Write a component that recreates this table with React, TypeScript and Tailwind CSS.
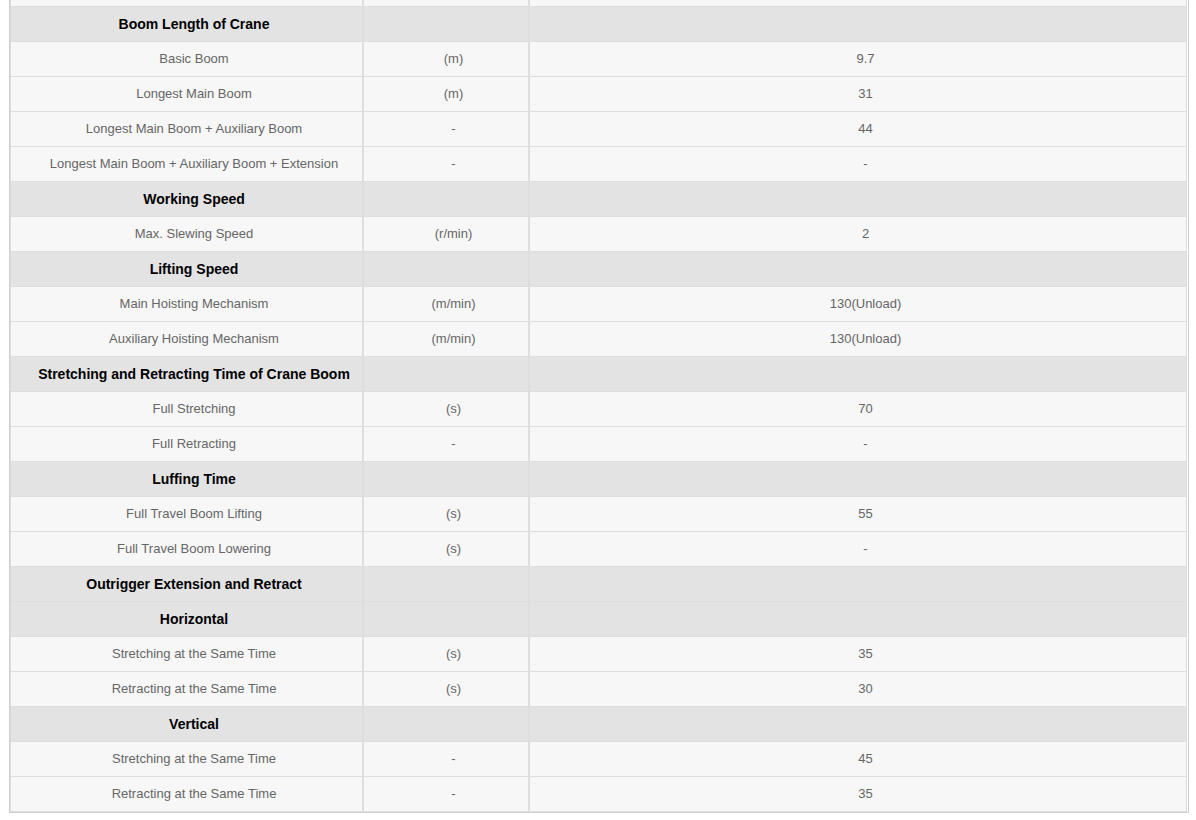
type Row = { label: string; unit?: string; value?: string; head?: boolean };

const rows: Row[] = [
  { label: "", unit: "", value: "" },
  { label: "Boom Length of Crane", head: true },
  { label: "Basic Boom", unit: "(m)", value: "9.7" },
  { label: "Longest Main Boom", unit: "(m)", value: "31" },
  { label: "Longest Main Boom + Auxiliary Boom", unit: "-", value: "44" },
  { label: "Longest Main Boom + Auxiliary Boom + Extension", unit: "-", value: "-" },
  { label: "Working Speed", head: true },
  { label: "Max. Slewing Speed", unit: "(r/min)", value: "2" },
  { label: "Lifting Speed", head: true },
  { label: "Main Hoisting Mechanism", unit: "(m/min)", value: "130(Unload)" },
  { label: "Auxiliary Hoisting Mechanism", unit: "(m/min)", value: "130(Unload)" },
  { label: "Stretching and Retracting Time of Crane Boom", head: true },
  { label: "Full Stretching", unit: "(s)", value: "70" },
  { label: "Full Retracting", unit: "-", value: "-" },
  { label: "Luffing Time", head: true },
  { label: "Full Travel Boom Lifting", unit: "(s)", value: "55" },
  { label: "Full Travel Boom Lowering", unit: "(s)", value: "-" },
  { label: "Outrigger Extension and Retract", head: true },
  { label: "Horizontal", head: true },
  { label: "Stretching at the Same Time", unit: "(s)", value: "35" },
  { label: "Retracting at the Same Time", unit: "(s)", value: "30" },
  { label: "Vertical", head: true },
  { label: "Stretching at the Same Time", unit: "-", value: "45" },
  { label: "Retracting at the Same Time", unit: "-", value: "35" },
];

function Cell({ text, head, last }: { text?: string; head?: boolean; last?: boolean }) {
  return (
    <div
      className={`flex h-[35px] items-center justify-center border-x border-t border-[#dedede] pl-[15px] ${
        last ? "h-[36px] border-b" : ""
      } ${
        head
          ? "bg-[#e3e3e3] text-[14px] font-bold text-black"
          : "bg-[#f7f7f7] text-[13px] text-[#666]"
      }`}
    >
      {text}
    </div>
  );
}

export default function App() {
  return (
    <div className="min-h-screen overflow-hidden bg-white font-['Liberation_Sans',Arial,sans-serif]">
      <div className="-mt-[30px] ml-[9px] w-[1180px] border border-[#cfcfcf] pr-px">
        {rows.map((r, i) => {
          const last = i === rows.length - 1;
          return (
            <div key={i} className="grid grid-cols-[353px_166px_1fr]">
              <Cell text={r.label} head={r.head} last={last} />
              <Cell text={r.head ? "" : r.unit} head={r.head} last={last} />
              <Cell text={r.head ? "" : r.value} head={r.head} last={last} />
            </div>
          );
        })}
      </div>
    </div>
  );
}
